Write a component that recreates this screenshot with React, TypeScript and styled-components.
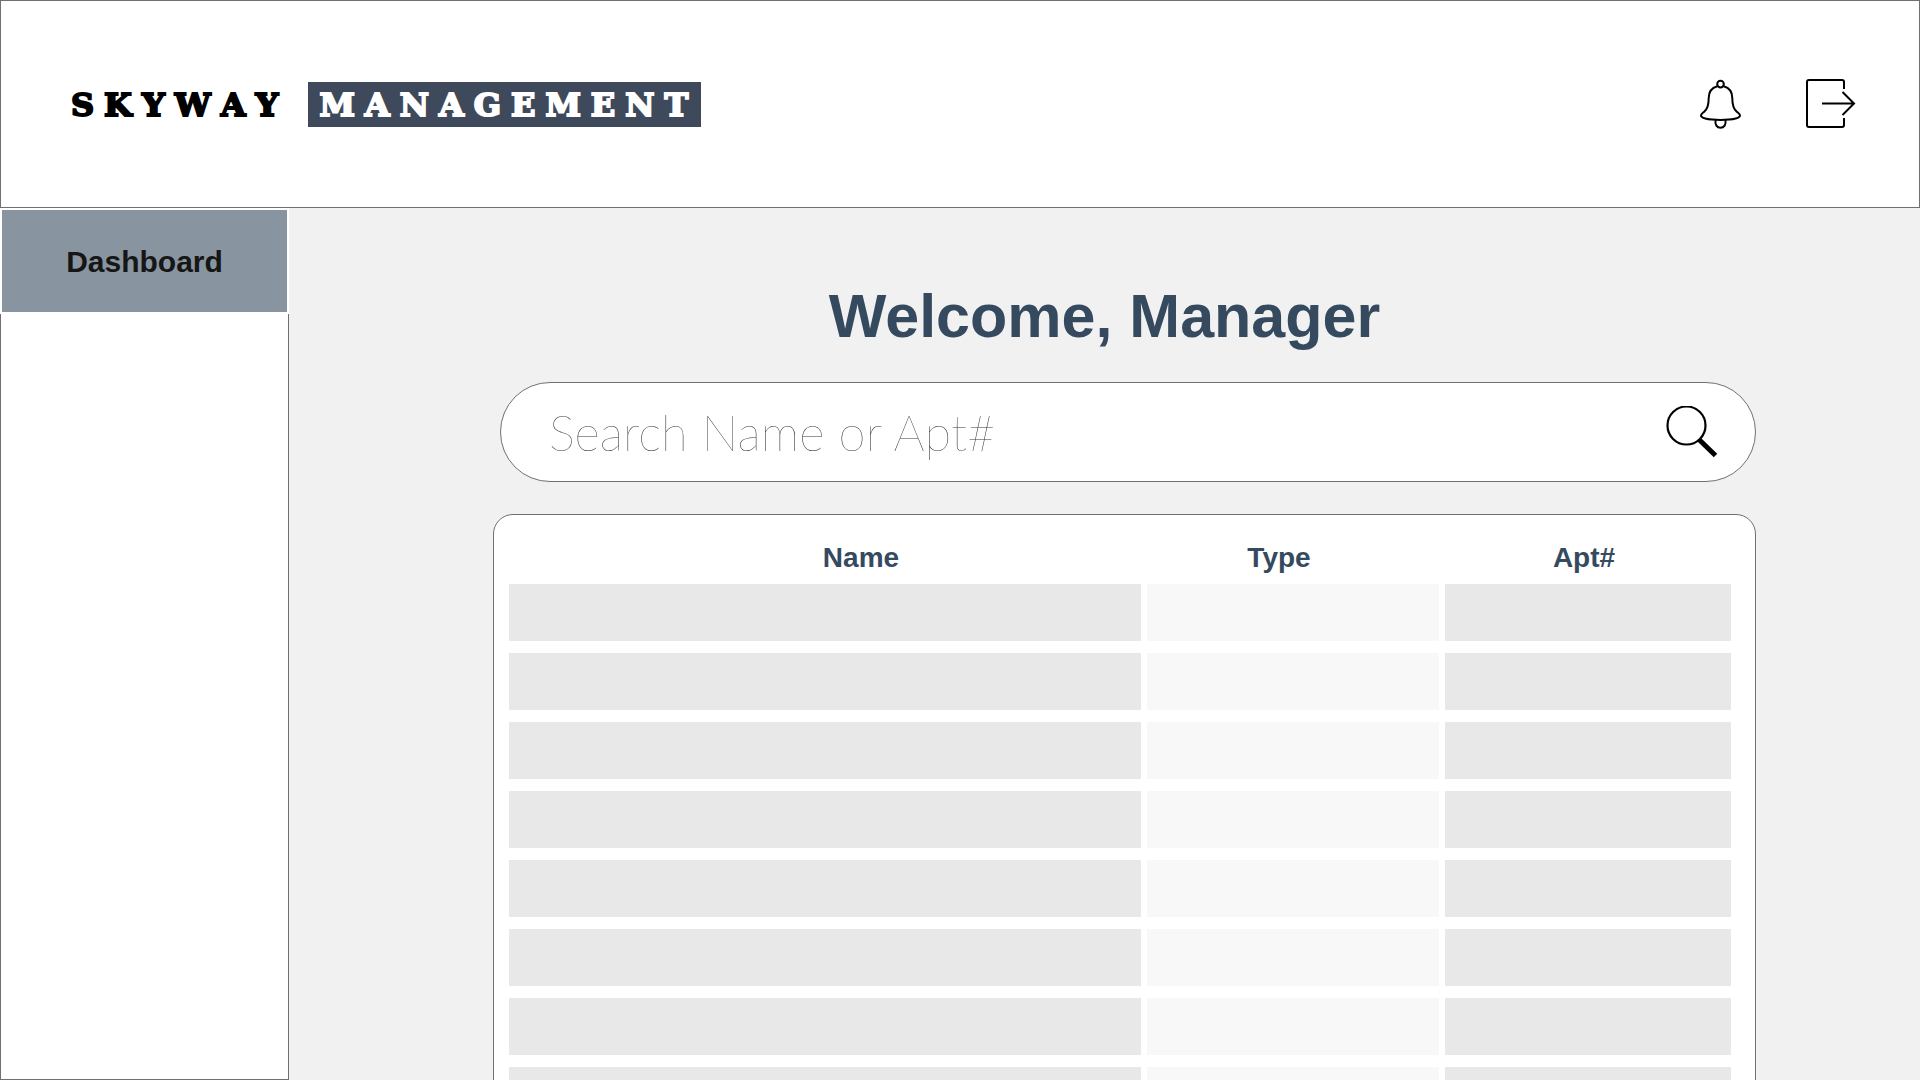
import React from 'react';
import styled, { createGlobalStyle } from 'styled-components';

const line = '#707070';
const navy = '#354a5f';

const GlobalStyle = createGlobalStyle`
  *, *::before, *::after { box-sizing: border-box; }
  body {
    margin: 0;
    background: #f1f1f1;
    font-family: "Liberation Sans", Arial, Helvetica, sans-serif;
  }
`;

const Page = styled.div`
  display: flex;
  flex-direction: column;
  height: 100vh;
`;

const Header = styled.header`
  display: flex;
  flex-shrink: 0;
  align-items: center;
  justify-content: space-between;
  height: 208px;
  padding: 0 63px 0 70px;
  background: #fff;
  border: 1px solid ${line};
`;

const Logo = styled.a`
  display: flex;
  align-items: baseline;
  gap: 20px;
  color: #000;
  font: bold 32px/43px "DejaVu Serif", serif;
  font-kerning: none;
  letter-spacing: 10px;
  text-decoration: none;
  -webkit-text-stroke: 2px currentColor;
`;

const LogoBadge = styled.span`
  padding: 2px 3px 0 11px;
  background: #3e495b;
  color: #fff;
`;

const Actions = styled.div`
  display: flex;
  align-items: center;
  gap: 64px;
`;

const IconButton = styled.button`
  display: flex;
  padding: 0;
  border: 0;
  background: none;
  color: #000;
  cursor: pointer;
`;

const Body = styled.div`
  display: flex;
  flex: 1;
  min-height: 0;
`;

const Sidebar = styled.nav`
  display: flex;
  flex-direction: column;
  flex-shrink: 0;
  width: 289px;
  background: #fff;
`;

const NavLink = styled.a`
  display: flex;
  align-items: center;
  justify-content: center;
  height: 106px;
  padding-top: 2px;
  border: 2px solid #fff;
  background: #8894a0;
  color: #161616;
  font-size: 30px;
  font-weight: bold;
  text-decoration: none;
`;

const SidebarFill = styled.div`
  flex: 1;
  border: 1px solid ${line};
  border-top: 0;
`;

const Main = styled.main`
  flex: 1;
  min-width: 0;
  padding-top: 74px;
  overflow-y: auto;
  scrollbar-width: none;
`;

const Title = styled.h1`
  margin: 0;
  color: ${navy};
  font-size: 61px;
  line-height: 68px;
  text-align: center;
`;

const Content = styled.div`
  display: flex;
  flex-direction: column;
  gap: 32px;
  padding: 32px 164px 32px 204px;
`;

const SearchBar = styled.form`
  display: flex;
  align-items: center;
  height: 100px;
  margin-left: 7px;
  padding: 0 37px 0 48px;
  border: 1px solid ${line};
  border-radius: 50px;
  background: #fff;
`;

const SearchInput = styled.input`
  flex: 1;
  min-width: 0;
  padding: 0;
  border: 0;
  outline: 0;
  background: none;
  color: #333;
  font: 100 49px/60px Lato, "Liberation Sans", sans-serif;

  &::placeholder {
    color: #333;
    opacity: 1;
  }
`;

const Card = styled.section`
  padding: 0 18px 0 9px;
  border: 1px solid ${line};
  border-radius: 20px;
  background: #fff;
`;

const Table = styled.table`
  width: 100%;
  table-layout: fixed;
  border-spacing: 6px 12px;
`;

const HeadCell = styled.th<{ $width?: string; $padding: string }>`
  width: ${(p) => p.$width ?? 'auto'};
  height: 45px;
  padding: ${(p) => p.$padding};
  color: ${navy};
  font-size: 28px;
  line-height: 28px;
  vertical-align: bottom;
`;

const Cell = styled.td<{ $light?: boolean }>`
  height: 57px;
  padding: 0;
  background: ${(p) => (p.$light ? '#f8f8f8' : '#e8e8e8')};
`;

const BellIcon = () => (
  <svg width="42" height="50" viewBox="0 -0.6 42 50" fill="none" stroke="currentColor" strokeWidth="2" aria-hidden="true">
    <circle cx="20.5" cy="4.5" r="3.3" />
    <path d="M17.3 6.7C11.5 8.3 8.7 12.5 8.7 18.5C8.7 25 8 29 4.5 31.8C2.5 33.5 1 34 1 36C1 38.7 9 40.4 20.5 40.4S40 38.7 40 36C40 34 38.5 33.5 36.5 31.8C33 29 32.3 25 32.3 18.5C32.3 12.5 29.5 8.3 23.7 6.7" />
    <path d="M15.6 40.5C14.6 45 17 48.2 20.5 48.2S26.4 45 25.4 40.5" />
  </svg>
);

const LogoutIcon = () => (
  <svg width="50" height="50" viewBox="0 0 50 50" fill="none" stroke="currentColor" strokeWidth="2" aria-hidden="true">
    <path d="M38 10V3Q38 1 36 1H3Q1 1 1 3V46Q1 48 3 48H36Q38 48 38 46V39" />
    <path d="M16 24.5H48M36.5 13L48 24.5L36.5 36" />
  </svg>
);

const SearchIcon = () => (
  <svg width="52" height="52" viewBox="0 0 52 52" fill="none" stroke="currentColor" aria-hidden="true">
    <circle cx="20.5" cy="19.5" r="19" strokeWidth="2.2" />
    <path d="M33 33.5L49.5 49.5" strokeWidth="5" />
  </svg>
);

const rows = Array.from({ length: 10 }, (_, i) => i);

export default function App() {
  return (
    <>
      <GlobalStyle />
      <Page>
        <Header>
          <Logo href="#">
            <span>SKYWAY</span>
            <LogoBadge>MANAGEMENT</LogoBadge>
          </Logo>
          <Actions>
            <IconButton type="button" aria-label="Notifications">
              <BellIcon />
            </IconButton>
            <IconButton type="button" aria-label="Log out">
              <LogoutIcon />
            </IconButton>
          </Actions>
        </Header>
        <Body>
          <Sidebar>
            <NavLink href="#" aria-current="page">Dashboard</NavLink>
            <SidebarFill />
          </Sidebar>
          <Main>
            <Title>Welcome, Manager</Title>
            <Content>
              <SearchBar role="search" onSubmit={(e) => e.preventDefault()}>
                <SearchInput type="text" aria-label="Search Name or Apt#" placeholder="Search Name or Apt#" />
                <IconButton type="submit" aria-label="Search">
                  <SearchIcon />
                </IconButton>
              </SearchBar>
              <Card>
                <Table>
                  <thead>
                    <tr>
                      <HeadCell scope="col" $padding="0 0 0 72px">Name</HeadCell>
                      <HeadCell scope="col" $width="292px" $padding="0 28px 0 0">Type</HeadCell>
                      <HeadCell scope="col" $width="286px" $padding="0 8px 0 0">Apt#</HeadCell>
                    </tr>
                  </thead>
                  <tbody>
                    {rows.map((row) => (
                      <tr key={row}>
                        <Cell />
                        <Cell $light />
                        <Cell />
                      </tr>
                    ))}
                  </tbody>
                </Table>
              </Card>
            </Content>
          </Main>
        </Body>
      </Page>
    </>
  );
}
